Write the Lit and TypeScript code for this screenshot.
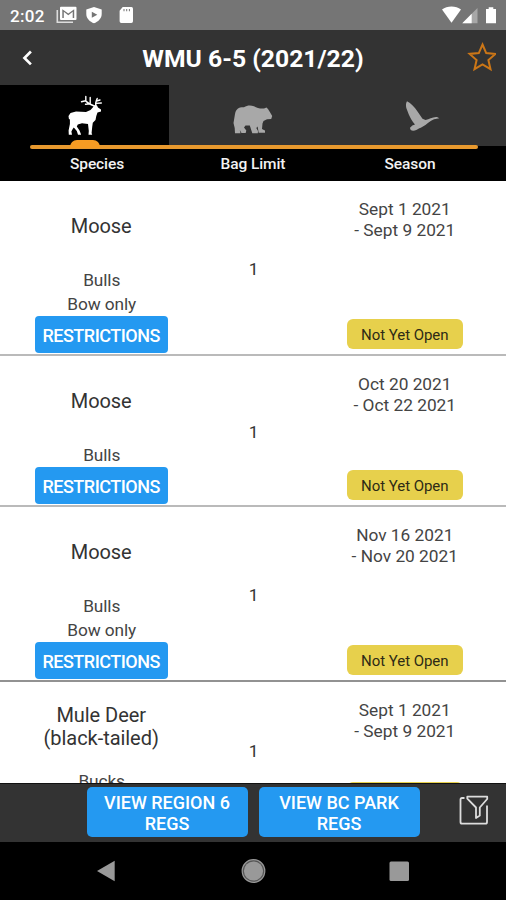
import { LitElement, html, css, svg, nothing } from "lit";
import { customElement, property } from "lit/decorators.js";

interface Hunt {
  species: string[];
  details: string[];
  limit: string;
  from: string;
  to: string;
  status: string;
  restricted: boolean;
}

const hunts: Hunt[] = [
  { species: ["Moose"], details: ["Bulls", "Bow only"], limit: "1", from: "Sept 1 2021", to: "- Sept 9 2021", status: "Not Yet Open", restricted: true },
  { species: ["Moose"], details: ["Bulls"], limit: "1", from: "Oct 20 2021", to: "- Oct 22 2021", status: "Not Yet Open", restricted: true },
  { species: ["Moose"], details: ["Bulls", "Bow only"], limit: "1", from: "Nov 16 2021", to: "- Nov 20 2021", status: "Not Yet Open", restricted: true },
  { species: ["Mule Deer", "(black-tailed)"], details: ["Bucks"], limit: "1", from: "Sept 1 2021", to: "- Sept 9 2021", status: "", restricted: false },
];

const elk = svg`<svg width="36" height="42" viewBox="0 0 36 42">
  <path fill="#fff" d="M27 11.5 30 11.5 31 13.5 34 15.5 34 17.5 30.5 18.5 29.3 22 28.5 26 25.8 28.8 25.2 33 24.6 39 25.2 40.8H21.5L21.8 37 21 30 15 29.2 10.8 30.5 9.8 32.5 12.5 36.5 14.2 40.8H11L9.8 37 6.8 33.4 5.7 35 4.4 37.5 5 40.8H1.8L1.6 36.5 2.9 30 2.9 25 2 25.5 1.5 22 3.5 19 9 17.6 19 18 23.5 16 26.2 13Z"/>
  <path fill="none" stroke="#fff" stroke-width="1.4" stroke-linecap="round" stroke-linejoin="round" d="M28.5 12.5C25 11.5 21.5 10 18.5 6.8L14.5 7.7M18.8 6.8V2.4M23.2 10V3.5M23.2 9.8 18.5 10.2M29 12C28.2 9.5 29.2 6.5 30.2 4.5M28.7 9.4 34.3 9M29.5 7 33 6"/>
</svg>`;

const bear = svg`<svg width="42" height="32" viewBox="0 0 42 32">
  <path fill="#a8a8a8" d="M3 11C4 5.5 7 4 12 4.2 15 2.5 18 2 22 3.2 25 5 28 5.8 32 5.5L34.5 4.4 36 6 38 9.3 40.2 13 39.2 16 35 16.2 31.5 18 30.5 20.5 30 26 33 27.5 33 29.8H26.7L25.6 23.5 24.3 25 26 28 25.8 30.3H20.3L17.8 22.5 13.5 22.5 12 24.5 14.3 27.5 13.7 30H9.5L7.8 27 8.5 30.3H3L2.7 25 1.5 20Z"/>
</svg>`;

const goose = svg`<svg width="36" height="32" viewBox="0 0 36 32">
  <path fill="#a8a8a8" d="M3 1.2C7 3.2 10.5 7 13.5 11.5L18.5 18.8 21.5 20C25.5 19.3 28.5 16.6 33 17L35.4 18.2 30 19.2C26 21 22.5 24.5 18.5 26.8 16 28.2 14.5 28.5 12.8 29.8 9 31.5 6 30.8 6 27.8L8.3 25.5 11 24.5C8.5 21.5 6.2 18 4.8 14.5L2.3 8C1.8 5 1.8 3 3 1.2Z"/>
</svg>`;

@customElement("status-bar")
class StatusBar extends LitElement {
  static styles = css`
    :host { display: flex; align-items: center; justify-content: space-between; height: 30px; padding: 0 8px 0 10px; box-sizing: border-box; background: #757575; color: #fff; font: 500 17px/30px Roboto, sans-serif; }
    .group { display: flex; align-items: center; }
    .time { width: 46px; letter-spacing: 0.3px; padding-top: 2px; }
  `;
  render() {
    return html`
      <div class="group">
        <span class="time">2:02</span>
        <svg width="21" height="18" viewBox="0 0 21 18">
          <path d="M1.3 4V16.2H17" fill="none" stroke="#ddd" stroke-width="1.6" />
          <path fill="#fff" fill-rule="evenodd" d="M5 .8H19.5Q20.5.8 20.5 1.8V13Q20.5 14 19.5 14H5Q4 14 4 13V1.8Q4 .8 5 .8ZM6.3 3.3V12H7.8V5.8L12.3 9.2 16.7 5.8V12H18.2V3.3L12.3 7.5Z" />
        </svg>
        <svg width="36" height="18" viewBox="0 0 36 18">
          <path fill="#fff" fill-rule="evenodd" d="M17 1 24.7 3.5V8C24.7 12.5 21 15.8 17 17.3 13 15.8 9.3 12.5 9.3 8V3.5ZM14.8 5.8V11.8L20.3 8.8Z" />
        </svg>
        <svg width="24" height="18" viewBox="0 0 24 18">
          <path transform="translate(-2 0)" fill="#fff" fill-rule="evenodd" d="M11.7 1H20.5Q22 1 22 2.7V15.3Q22 17 20.3 17H10.3Q8.6 17 8.6 15.3V4.8ZM12.5 3V5.3H13.5V3ZM15.2 3V5.3H16.2V3ZM17.9 3V5.3H18.9V3Z" />
        </svg>
      </div>
      <svg width="56" height="18" viewBox="0 0 56 18">
        <path fill="#fff" d="M0 3.5C5-.5 14-.5 19 3.5L9.5 16.8Z" />
        <path fill="#a7a7a7" d="M35.5 2V17.2H20.3Z" />
        <path fill="#fff" d="M29.7 7.8V17.2H20.3Z" />
        <path fill="#fff" d="M46.7 1.2H51.3V3H54V17.2H44V3H46.7Z" />
      </svg>
    `;
  }
}

@customElement("hunt-row")
class HuntRow extends LitElement {
  @property({ attribute: false }) hunt!: Hunt;
  static styles = css`
    :host { display: grid; grid-template-columns: 2fr 1fr 2fr; flex: none; border-bottom: 2px solid #bababa; background: #fff; color: #222; text-align: center; font: 400 17.3px/24px Roboto, sans-serif; }
    :host(.short) { height: 135px; }
    :host(.dark) { border-bottom-color: #929292; }
    .left { display: flex; flex-direction: column; align-items: center; padding-bottom: 1px; }
    .species { display: flex; flex-direction: column; justify-content: center; height: 87px; padding-top: 3px; box-sizing: border-box; font-size: 20px; line-height: 23px; letter-spacing: -0.05px; color: #333; }
    .detail { color: #444; letter-spacing: -0.1px; padding-left: 1px; }
    .button { width: 133px; height: 37px; border-radius: 4px; background: #2499f1; color: #fff; font-size: 18px; font-weight: 500; line-height: 39px; letter-spacing: -0.5px; }
    .limit { display: flex; align-items: center; justify-content: center; color: #333; padding: 3px 0 0 1px; }
    .right { display: flex; flex-direction: column; align-items: center; justify-content: space-between; padding: 18px 0 5.5px; }
    .dates { line-height: 20.5px; color: #444; }
    .badge { width: 116px; height: 29.5px; border-radius: 6px; background: #e7d04c; color: #2d2a16; font-size: 15px; line-height: 32px; letter-spacing: -0.05px; }
  `;
  render() {
    const h = this.hunt;
    return html`
      <div class="left">
        <div class="species">${h.species.map((s) => html`<div>${s}</div>`)}</div>
        ${h.details.map((d) => html`<div class="detail">${d}</div>`)}
        ${h.restricted ? html`<div class="button">RESTRICTIONS</div>` : nothing}
      </div>
      <div class="limit">${h.limit}</div>
      <div class="right">
        <div class="dates"><div>${h.from}</div><div>${h.to}</div></div>
        <div class="badge">${h.status}</div>
      </div>
    `;
  }
}

@customElement("app-root")
class AppRoot extends LitElement {
  static styles = css`
    :host { display: flex; flex-direction: column; height: 900px; overflow: hidden; background: #fff; font-family: Roboto, sans-serif; }
    .bar { display: grid; grid-template-columns: 54px 1fr 54px; align-items: center; height: 55px; flex: none; background: #333; color: #fff; }
    .bar svg { justify-self: center; display: block; }
    .title { text-align: center; font-size: 24.7px; font-weight: 700; line-height: 55px; padding-top: 1px; height: 54px; }
    .tabs { position: relative; display: grid; grid-template-columns: repeat(3, 1fr); height: 61px; flex: none; background: #333; }
    .tab { display: flex; align-items: center; justify-content: center; }
    .tab.active { background: #000; }
    .line { position: absolute; left: 30px; width: 448px; top: 60px; height: 3.5px; border-radius: 2px; background: #e8992e; }
    .knob { position: absolute; left: 69.5px; top: 54.5px; width: 30px; height: 8px; border-radius: 7px 7px 0 0; background: #f59b23; }
    .heads { display: grid; grid-template-columns: 194px 118px 196px; height: 35px; flex: none; background: #000; color: #f2f2f2; text-align: center; font-size: 15.5px; font-weight: 500; line-height: 36px; letter-spacing: -0.1px; }
    .list { display: flex; flex-direction: column; flex: 1; min-height: 0; overflow: hidden; }
    .footer { display: grid; grid-template-columns: 161px 161px 1fr; column-gap: 11px; align-items: start; height: 59.5px; padding: 3px 0 0 86.5px; flex: none; background: #333; border-top: 1px solid #111; box-sizing: border-box; }
    .view { height: 50.5px; border-radius: 5px; background: #2499f1; color: #fff; font-size: 18px; font-weight: 500; line-height: 21px; text-align: center; padding-top: 5px; box-sizing: border-box; }
    .filter { justify-self: center; margin: 8.5px 0 0 11px; }
    .nav { display: block; flex: none; background: #000; }
    .deer { margin: 3px 0 0 1px; }
    .bruin { margin-top: 11px; }
    .bird { margin: 5px 0 0 1px; }
  `;
  render() {
    return html`
      <status-bar></status-bar>
      <div class="bar">
        <svg width="20" height="22" viewBox="0 0 20 22"><path d="M13.8 4.2 7 11 13.8 17.8" transform="translate(.8 .5) scale(.95)" fill="none" stroke="#fff" stroke-width="2.8" /></svg>
        <div class="title">WMU 6-5 (2021/22)</div>
        <svg width="34" height="34" viewBox="-1 0 34 34"><path d="M19.5 3.5 23.2 12.1 32.4 12.9 25.4 19 27.5 28.2 19.5 23.4 11.5 28.2 13.6 19 6.6 12.9 15.8 12.1Z" fill="none" stroke="#cb7617" stroke-width="2" /></svg>
      </div>
      <div class="tabs">
        <div class="tab active"><div class="deer">${elk}</div></div>
        <div class="tab"><div class="bruin">${bear}</div></div>
        <div class="tab"><div class="bird">${goose}</div></div>
        <div class="line"></div>
        <div class="knob"></div>
      </div>
      <div class="heads"><div>Species</div><div>Bag Limit</div><div>Season</div></div>
      <div class="list">
        ${hunts.map((h, i) => html`<hunt-row class=${i === 3 ? "short" : i === 2 ? "dark" : ""} .hunt=${h}></hunt-row>`)}
      </div>
      <div class="footer">
        <div class="view">VIEW REGION 6<br />REGS</div>
        <div class="view">VIEW BC PARK<br />REGS</div>
        <svg class="filter" width="32" height="32" viewBox="0 0 32 32" fill="none" stroke="#ddd" stroke-width="1.8" stroke-linejoin="round">
          <path d="M6.5 3H4Q2.5 3 2.5 4.5V27Q2.5 28.7 4 28.7H27.5Q29 28.7 29 27V10.5" />
          <path d="M9.3 1.7H29.2V4L21.8 12.5V20.5L18 23V12.5L9.3 3.7Z" />
        </svg>
      </div>
      <svg class="nav" width="506" height="58" viewBox="0 0 506 58">
        <path d="M97 29 114.7 18.7V39.3Z" fill="#999" />
        <circle cx="253.5" cy="29" r="11.3" fill="#555" stroke="#999" stroke-width="1.2" />
        <circle cx="253.5" cy="29" r="9.6" fill="#999" />
        <rect x="389.5" y="19.5" width="19.5" height="19.5" rx="1.5" fill="#999" />
      </svg>
    `;
  }
}
